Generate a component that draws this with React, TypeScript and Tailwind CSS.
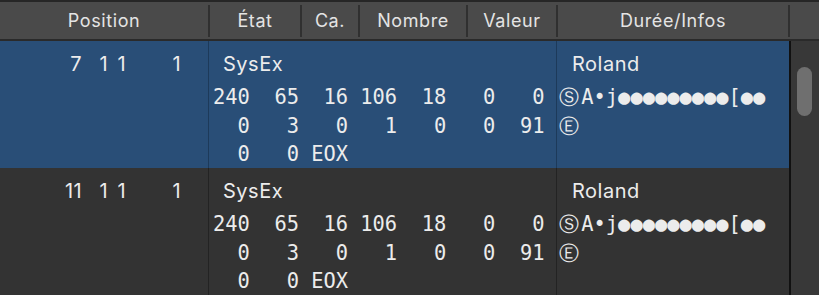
const sans = { fontFamily: "Inter, 'Noto Sans', sans-serif" };
const mono = { fontFamily: "'DejaVu Sans Mono', 'Liberation Mono', monospace" };

const headers = [
  { label: "Position", w: "w-[210px]" },
  { label: "État", w: "w-[92px]" },
  { label: "Ca.", w: "w-[58px]" },
  { label: "Nombre", w: "w-[108px]" },
  { label: "Valeur", w: "w-[90px]" },
  { label: "Durée/Infos", w: "w-[232px]" },
];

type Row = { bar: string; selected: boolean };

const rows: Row[] = [
  { bar: "7", selected: true },
  { bar: "11", selected: false },
];

function Cell({ children, wide }: { children: string; wide?: boolean }) {
  return (
    <span className={`inline-block text-center ${wide ? "w-[2ch]" : "w-[1ch]"}`}>{children}</span>
  );
}

function SysExRow({ row }: { row: Row }) {
  const bg = row.selected ? "bg-[#294e77]" : "bg-[#333333]";
  const line = row.selected ? "border-[#1d3a5a]" : "border-[#232323]";
  return (
    <div className={`flex h-[127px] ${bg} text-[#ececec]`}>
      <div className={`w-[209px] shrink-0 border-r ${line} pt-[8px]`}>
        <div className="flex h-[29px] items-center justify-end pr-[27px] text-[20px] tracking-[0.4px]" style={sans}>
          <span className="text-right">{row.bar}</span>
          <span className="w-[26px] text-right">1</span>
          <span className="w-[18px] text-right">1</span>
          <span className="w-[55px] text-right">1</span>
        </div>
      </div>
      <div className={`w-[348px] shrink-0 border-r ${line} pt-[8px]`}>
        <div className="flex h-[29px] items-center pl-[14px] text-[20px] tracking-[0.5px]" style={sans}>
          SysEx
        </div>
        <div className="mt-[5px] whitespace-pre pl-[4px] text-[20.4px] leading-[28.5px]" style={mono}>
          <div>
            {"240  65  16 106  18   0   0 "}
            <Cell wide>Ⓢ</Cell>A<Cell>•</Cell>j
            {Array.from({ length: 9 }).map((_, i) => (
              <Cell key={i}>●</Cell>
            ))}
            [<Cell>●</Cell>
            <Cell>●</Cell>
          </div>
          <div>
            {"  0   3   0   1   0   0  91 "}
            <Cell wide>Ⓔ</Cell>
          </div>
          <div>{"  0   0 EOX"}</div>
        </div>
      </div>
      <div className="w-[232px] shrink-0 pt-[8px]">
        <div className="flex h-[29px] items-center pl-[15px] text-[20px] tracking-[0.5px]" style={sans}>
          Roland
        </div>
      </div>
    </div>
  );
}

export default function App() {
  return (
    <div className="flex h-[295px] w-[819px] flex-col overflow-hidden bg-[#333333]" style={sans}>
      <div className="h-[2px] bg-[#262626]" />
      <div className="flex h-[39px] shrink-0 border-b-2 border-[#2a2a2a] bg-[#4a4a4a] text-[18px] tracking-[0.6px] text-[#e4e4e4]">
        {headers.map((h) => (
          <div key={h.label} className={`flex ${h.w} items-center`}>
            <span className="flex-1 text-center">{h.label}</span>
            <div className="h-[32px] w-[2px] bg-[#303030]" />
          </div>
        ))}
        <div className="flex-1" />
      </div>
      <div className="flex min-h-0 flex-1">
        <div className="flex w-[789px] flex-col">
          {rows.map((r) => (
            <SysExRow key={r.bar} row={r} />
          ))}
        </div>
        <div className="w-[2px] bg-[#111111]" />
        <div className="flex-1 bg-[#383838] px-[6px] pt-[26px]">
          <div className="h-[49px] w-[15px] rounded-full bg-[#6f6f6f]" />
        </div>
      </div>
    </div>
  );
}
